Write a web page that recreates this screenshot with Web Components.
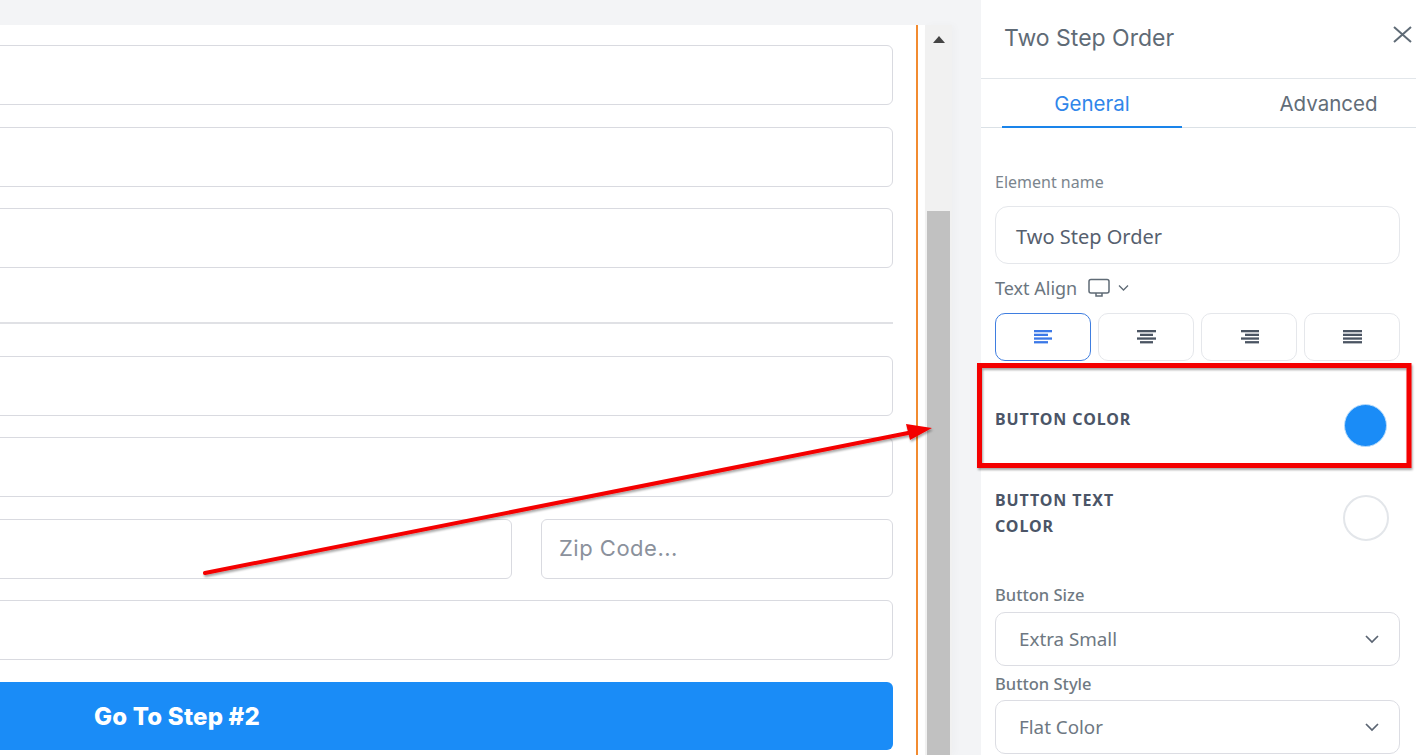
<!DOCTYPE html>
<html>
<head>
<meta charset="utf-8">
<title>Two Step Order</title>
<style>
  html, body { margin: 0; height: 100%; }
  body { height: 755px; overflow: hidden; background: #f3f4f6; font-family: "Inter", "Liberation Sans", sans-serif; }
  #app { display: flex; height: 755px; position: relative; overflow: hidden; }
</style>
</head>
<body>
<div id="app">
  <form-canvas>
    <form-input></form-input>
    <form-input></form-input>
    <form-input></form-input>
    <form-divider></form-divider>
    <form-input></form-input>
    <form-input></form-input>
    <form-split><form-input></form-input><form-input placeholder="Zip Code..." plain></form-input></form-split>
    <form-input></form-input>
    <step-button>Go To Step #2</step-button>
  </form-canvas>
  <side-panel title-text="Two Step Order">
    <text-field label="Element name" value="Two Step Order"></text-field>
    <align-picker></align-picker>
    <color-row color="#1a8cf7" size="43" height="131">BUTTON COLOR</color-row>
    <color-row color="#fff" size="46" height="90" wide>BUTTON TEXT<br>COLOR</color-row>
    <select-field label="Button Size" value="Extra Small" top="5" label-h="26"></select-field>
    <select-field label="Button Style" value="Flat Color" top="9" label-h="25"></select-field>
  </side-panel>
  <red-notes></red-notes>
</div>

<script>
(function() {
    function define(name, css, html, init) {
        const template = document.createElement('template');
        template.innerHTML = `<style>${css}</style>${html}`;
        customElements.define(name, class extends HTMLElement {
            constructor() {
                super();
                this.attachShadow({mode: 'open'});
                this.shadowRoot.appendChild(template.content.cloneNode(true));
            }
            connectedCallback() {
                if (init) init(this, this.shadowRoot);
            }
        });
    }

    const alignIcon = (rows, fill) => `<svg width="19" height="16" viewBox="0 0 19 16">${
        rows.map((r, i) => `<rect x="${r[0]}" y="${1 + i * 3.7}" width="${r[1]}" height="2.3" fill="${fill}"/>`).join('')
    }</svg>`;

    const chevron = `<svg width="16" height="10" viewBox="0 0 16 10"><path d="M2 2 L8 8 L14 2" fill="none" stroke="#5a6472" stroke-width="1.7"/></svg>`;

    define('form-canvas', `
        :host { display: flex; flex: 0 0 981px; width: 981px; padding-top: 25px; box-sizing: border-box; height: 755px; }
        .page { flex: 0 0 918px; box-sizing: border-box; background: #fff; border-right: 2px solid #f28b30; overflow: hidden; }
        .form { width: 893px; padding-top: 20px; display: flex; flex-direction: column; gap: 21.5px; }
        .gutter { flex: 0 0 7px; background: #fff; }
        .bar { flex: 0 0 27px; background: #f1f1f1; display: flex; flex-direction: column; align-items: center; box-shadow: 3px 0 8px rgba(0,0,0,.025); }
        .up { width: 0; height: 0; margin-top: 11px; border-left: 6px solid transparent; border-right: 6px solid transparent; border-bottom: 7px solid #444; }
        .thumb { width: 23px; flex: 1; margin-top: 168px; background: #c1c1c1; }
    `, `
        <div class="page"><div class="form"><slot></slot></div></div>
        <div class="gutter"></div>
        <div class="bar"><div class="up"></div><div class="thumb"></div></div>
    `);

    define('form-input', `
        :host { display: block; height: 60px; box-sizing: border-box; margin-left: -40px; background: #fff;
                border: 1px solid #d9dae0; border-radius: 6px; padding-left: 17px;
                font: 400 22px/56px "Inter", "Liberation Sans", sans-serif; color: #8b919c; letter-spacing: 0.5px; }
        :host([plain]) { margin-left: 0; }
    `, `<span id="t"></span>`, (el, root) => {
        root.getElementById('t').textContent = el.getAttribute('placeholder') || '';
    });

    define('form-split', `
        :host { display: grid; grid-template-columns: 1fr 352px; column-gap: 29px; }
    `, `<slot></slot>`);

    define('form-divider', `
        :host { display: block; height: 2px; background: #e0e1e5; margin: 32.5px 0 10.4px -40px; }
    `, ``);

    define('step-button', `
        :host { display: flex; align-items: center; height: 68px; box-sizing: border-box; padding: 2px 0 0 94px;
                background: #1a8cf7; color: #fff; border-radius: 0 6px 6px 0; font: 800 24px "Inter", "Liberation Sans", sans-serif; letter-spacing: 0.2px; }
    `, `<slot></slot>`);

    define('side-panel', `
        :host { display: flex; flex-direction: column; flex: 0 0 435px; width: 435px; height: 755px; box-sizing: border-box; background: #fff; color: #5f6b76; }
        header { height: 79px; flex: none; box-sizing: border-box; display: flex; align-items: center; justify-content: space-between;
                 padding: 0 3px 3px 23px; border-bottom: 1px solid #e2e6ea; font: 400 23px "Inter", "Liberation Sans", sans-serif; }
        svg { display: block; margin-bottom: 6px; }
        nav { height: 49px; flex: none; box-sizing: border-box; display: flex; padding-left: 21px; border-bottom: 1px solid #dbe1e6;
              font: 400 20.5px/50px "Inter", "Liberation Sans", sans-serif; }
        .tab { flex: 0 0 180px; text-align: center; color: #2f86ea; height: 49px; box-sizing: border-box; border-bottom: 2px solid #1a84ea; }
        .tab.off { flex: 0 0 175px; margin-left: 59px; color: #626d78; border: 0; }
        .body { padding: 45px 16px 0 14px; display: flex; flex-direction: column; }
    `, `
        <header><span id="title"></span>
          <svg width="22" height="22" viewBox="0 0 22 22"><path d="M3 3 L20 18 M20 3 L3 18" stroke="#5f6b76" stroke-width="2" fill="none"/></svg>
        </header>
        <nav><div class="tab">General</div><div class="tab off">Advanced</div></nav>
        <div class="body"><slot></slot></div>
    `, (el, root) => {
        root.getElementById('title').textContent = el.getAttribute('title-text');
    });

    define('text-field', `
        :host { display: block; font-family: "Noto Sans", "Liberation Sans", sans-serif; }
        label { display: block; font-size: 16px; line-height: 20px; color: #7b858e; height: 34px; margin-top: -1px; }
        .box { height: 58px; box-sizing: border-box; border: 1px solid #e5e7eb; border-radius: 13px; padding-left: 20px;
               font: 400 20px/60px "Noto Sans", "Liberation Sans", sans-serif; color: #56606e; }
    `, `<label id="l"></label><div class="box" id="v"></div>`, (el, root) => {
        root.getElementById('l').textContent = el.getAttribute('label');
        root.getElementById('v').textContent = el.getAttribute('value');
    });

    define('align-picker', `
        :host { display: block; font-family: "Noto Sans", "Liberation Sans", sans-serif; }
        .head { display: flex; align-items: center; height: 24px; margin-top: 12px; font-size: 18px; color: #6b7680; gap: 11px; }
        .head svg { display: block; }
        .row { display: grid; grid-template-columns: repeat(4, 96px); column-gap: 7px; margin-top: 13px; }
        .btn { height: 48px; box-sizing: border-box; border: 1px solid #e5e7eb; border-radius: 10px; display: flex; align-items: center; justify-content: center; }
        .btn.on { border-color: #3f7ee0; }
    `, `
        <div class="head"><span>Text Align</span>
          <span style="display:flex;align-items:center;gap:8px">
            <svg width="22" height="20" viewBox="0 0 22 20"><rect x="1" y="1.5" width="20" height="13.5" rx="2" fill="none" stroke="#5f6b76" stroke-width="1.5"/><path d="M8 15 V18 H14 V15" fill="none" stroke="#5f6b76" stroke-width="1.5"/></svg>
            <svg width="11" height="8" viewBox="0 0 11 8"><path d="M1 1.5 L5.5 6 L10 1.5" fill="none" stroke="#5f6b76" stroke-width="1.3"/></svg>
          </span>
        </div>
        <div class="row">
          <div class="btn on">${alignIcon([[0,18],[0,14],[0,18],[0,14]], '#3b78e7')}</div>
          <div class="btn">${alignIcon([[0,19],[3,13],[0,19],[3,13]], '#4b5563')}</div>
          <div class="btn">${alignIcon([[1,18],[5,14],[1,18],[5,14]], '#4b5563')}</div>
          <div class="btn">${alignIcon([[0,19],[0,19],[0,19],[0,19]], '#4b5563')}</div>
        </div>
    `);

    define('color-row', `
        :host { display: flex; justify-content: space-between; align-items: flex-start; padding-right: 13px;
                font: 700 16px/26px "Noto Sans", "Liberation Sans", sans-serif; color: #4b5567; letter-spacing: 0.9px; }
        .dot { box-sizing: border-box; border-radius: 50%; }
    `, `<div id="t"><slot></slot></div><div class="dot" id="d"></div>`, (el, root) => {
        const size = +el.getAttribute('size');
        const d = root.getElementById('d');
        d.style.width = d.style.height = size + 'px';
        d.style.background = el.getAttribute('color');
        d.style.border = el.hasAttribute('wide') ? '2px solid #e3e6ea' : '1px solid #b9dcfb';
        el.style.height = el.getAttribute('height') + 'px';
        if (el.hasAttribute('wide')) {
            root.getElementById('t').style.marginTop = '-4px';
            d.style.marginRight = '-2px';
            d.style.marginTop = '4px';
            el.style.marginTop = '-1px';
        } else {
            root.getElementById('t').style.marginTop = '45px';
            d.style.marginTop = '43px';
        }
    });

    define('select-field', `
        :host { display: block; font-family: "Noto Sans", "Liberation Sans", sans-serif; }
        label { display: block; font-size: 16.5px; font-weight: 500; line-height: 20px; color: #6f7982; position: relative; top: -1px; }
        .box { height: 54px; box-sizing: border-box; border: 1px solid #dcdde3; border-radius: 10px; display: flex; align-items: center; justify-content: space-between;
               padding: 0 19px 0 23px; font-size: 18.8px; color: #6e7882; }
    `, `<label id="l"></label><div class="box"><span id="v"></span>${chevron}</div>`, (el, root) => {
        const label = root.getElementById('l');
        label.textContent = el.getAttribute('label');
        label.style.height = el.getAttribute('label-h') + 'px';
        root.getElementById('v').textContent = el.getAttribute('value');
        el.style.marginTop = el.getAttribute('top') + 'px';
    });

    // annotation drawn over the screenshot, sits over both panes
    define('red-notes', `
        :host { position: absolute; left: 0; top: 0; width: 1416px; height: 755px; pointer-events: none; }
        svg { display: block; }
    `, `
        <svg width="1416" height="755" viewBox="0 0 1416 755">
          <defs><filter id="sh" x="-5%" y="-20%" width="110%" height="140%"><feDropShadow dx="1" dy="2" stdDeviation="1.2" flood-color="#000" flood-opacity="0.35"/></filter></defs>
          <g filter="url(#sh)">
            <rect x="979.5" y="365.5" width="429.5" height="100" fill="none" stroke="#f40000" stroke-width="5"/>
            <path d="M205 573 L908 433" stroke="#f40000" stroke-width="4" stroke-linecap="round" fill="none"/>
            <path d="M906 424 L932 428 L910 440 Z" fill="#f40000"/>
          </g>
        </svg>
    `);
})();
</script>
</body>
</html>
